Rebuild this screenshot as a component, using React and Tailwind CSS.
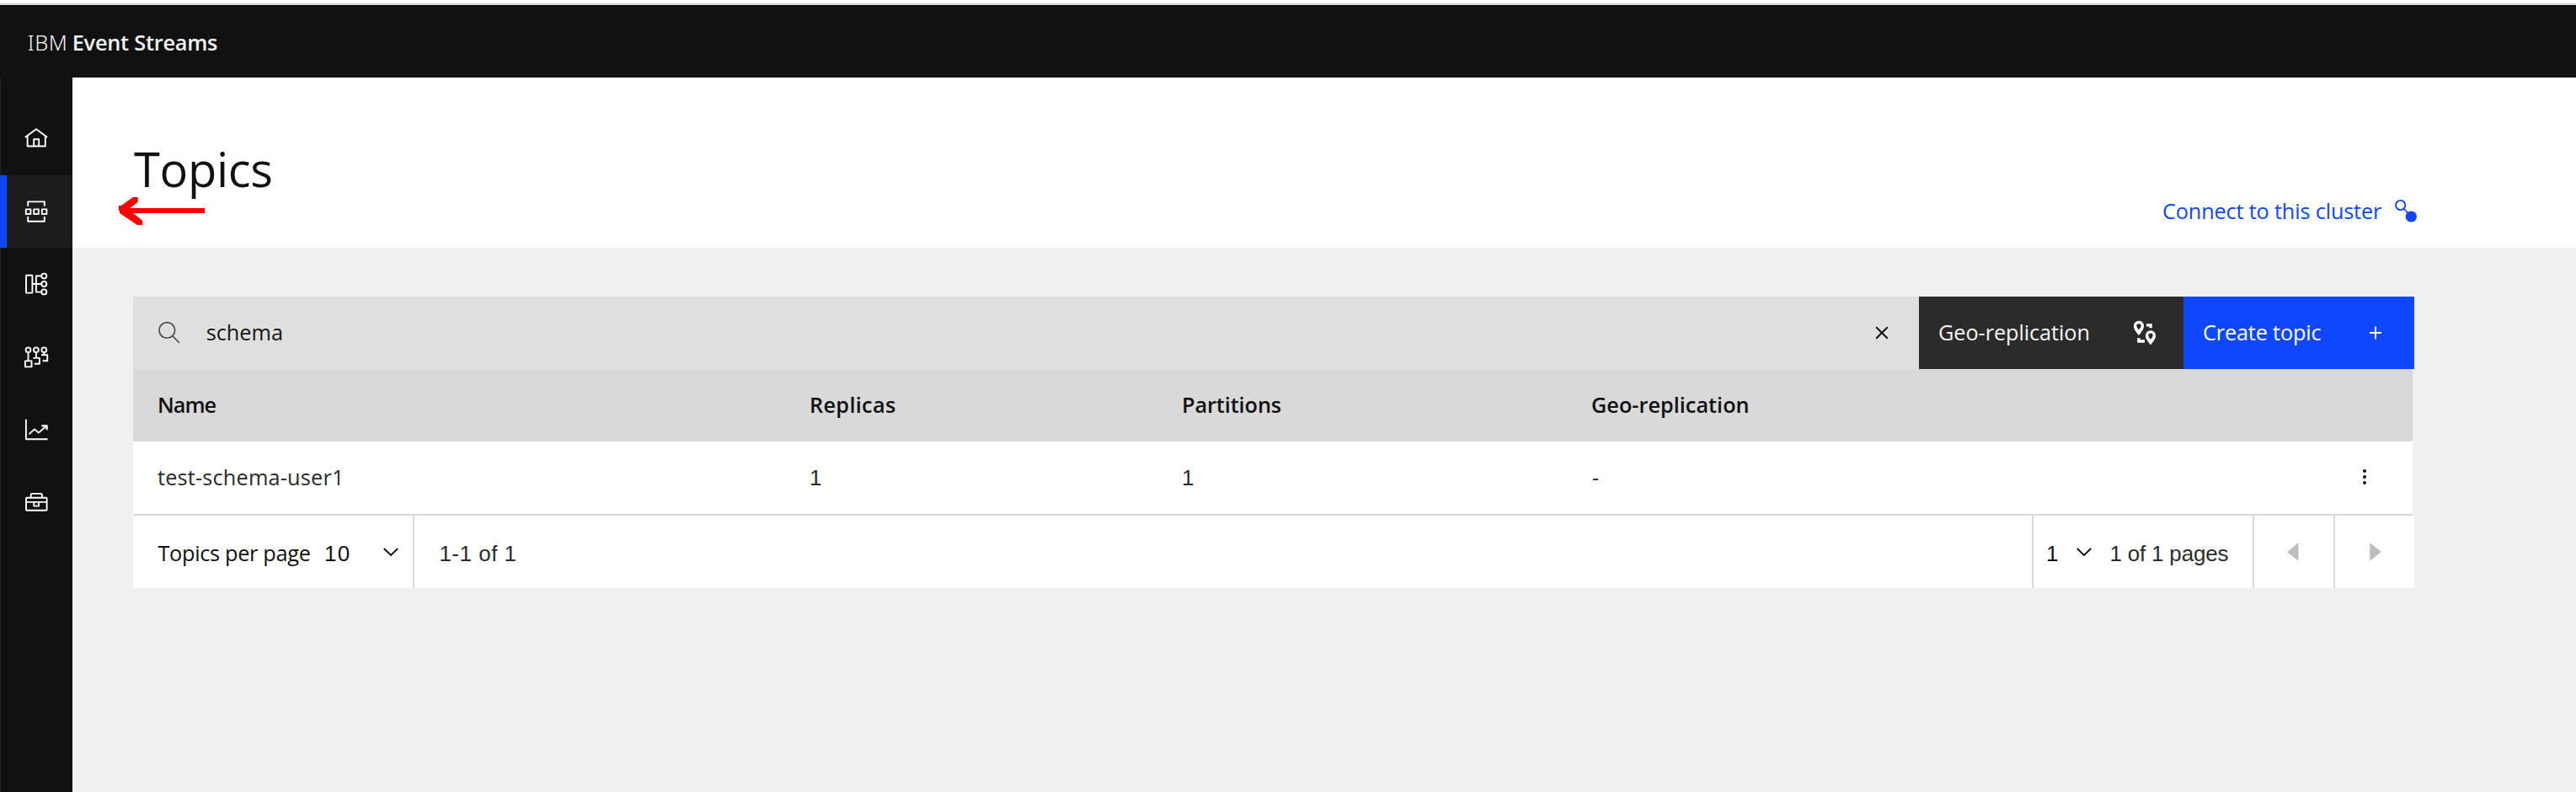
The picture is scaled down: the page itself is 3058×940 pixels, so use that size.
const OPEN = "font-['Open_Sans','Noto_Sans',sans-serif] text-[25.3px]";
const DIGITS = "font-['Liberation_Sans',Arial,sans-serif] text-[26px]";

function NavIcon({ children }) {
  return (
    <svg width="86" height="86" viewBox="0 0 86 86" fill="none" stroke="#fff" strokeWidth="1.9" strokeLinejoin="round" className="block">
      {children}
    </svg>
  );
}

function NavItem({ active, children }) {
  return (
    <a className={"flex h-[86px] w-[86px] shrink-0 " + (active ? "bg-[#1c1c1c] shadow-[inset_8px_0_0_#0f47ff]" : "")}>
      <NavIcon>{children}</NavIcon>
    </a>
  );
}

function Sidebar() {
  return (
    <nav className="flex w-[86px] shrink-0 flex-col bg-[#111] pt-[30px] shadow-[inset_1px_0_0_#242424]">
      <NavItem>
        <path d="M29.8 41 43 31.2 56.2 41M32.6 39.3V51.5H53.8V39.3M40.2 51.5V43.2H46.2V51.5" />
      </NavItem>
      <NavItem active>
        <path d="M33.2 36.8V31.4H52.8V36.8M33.2 49V54.7H52.8V49" />
        <rect x="30.8" y="40.4" width="5.6" height="5.6" />
        <rect x="40.2" y="40.4" width="5.6" height="5.6" />
        <rect x="49.8" y="40.4" width="5.6" height="5.6" />
      </NavItem>
      <NavItem>
        <rect x="31" y="32.8" width="7.4" height="20.8" rx="0.6" />
        <path d="M38.4 43H49.2M49.3 33.5H42.9V52.6H49.3" />
        <circle cx="52.3" cy="33.6" r="3" />
        <circle cx="52.3" cy="43" r="3" />
        <circle cx="52.3" cy="52.4" r="3" />
      </NavItem>
      <NavItem>
        <circle cx="33.5" cy="35.3" r="2.9" />
        <circle cx="42.9" cy="35.3" r="2.9" />
        <circle cx="52.3" cy="35.3" r="2.9" />
        <path d="M33.5 38.2V48.4M42.9 38.2V45M52.3 38.2V41.2M39.4 44.9H46.9V51.8H40.8M49 41.3H56.2V48.3H50.6" />
        <rect x="29.9" y="48.4" width="7.6" height="7" />
      </NavItem>
      <NavItem>
        <path d="M30.9 31.7V55.2H56.6M34.3 49.4 41 43.4 45.8 47.6 55 39.8" />
        <path d="M49.4 39.3H55.6V44.2" strokeWidth="2.2" />
      </NavItem>
      <NavItem>
        <rect x="31" y="38.8" width="24.6" height="15" rx="0.8" />
        <path d="M36.7 38.8V35.2Q36.7 33.9 38 33.9H48.6Q49.9 33.9 49.9 35.2V38.8M31 43.9H55.6M40.3 43.9V48.6H46V43.9" />
      </NavItem>
    </nav>
  );
}

function ConnectIcon() {
  return (
    <svg width="28" height="30" viewBox="0 0 28 30" className="block">
      <circle cx="7.7" cy="8.5" r="5.6" fill="none" stroke="#0f47ff" strokeWidth="1.9" />
      <path d="M11.6 12.5 16 17.5" stroke="#0f47ff" strokeWidth="1.8" />
      <circle cx="20.3" cy="22" r="6.6" fill="#0f47ff" />
    </svg>
  );
}

function GeoIcon() {
  return (
    <svg width="28" height="30" viewBox="0 0 28 30" fill="#fff" className="block">
      <path fillRule="evenodd" d="M7 .7a6.1 6.1 0 0 1 6.1 6.1C13.1 10.8 10 14.3 7 18 4 14.3.9 10.8.9 6.8A6.1 6.1 0 0 1 7 .7ZM7 4.2C5.2 4.2 4.3 5.3 4.3 6.8 4.3 8.2 5.8 9.8 7 11.6 8.2 9.8 9.7 8.2 9.7 6.8 9.7 5.3 8.8 4.2 7 4.2Z" />
      <path fillRule="evenodd" d="M21 12.2a6.1 6.1 0 0 1 6.1 6.1C27.1 22.3 24 25.6 21 29.3 18 25.6 14.9 22.3 14.9 18.3A6.1 6.1 0 0 1 21 12.2ZM21 15.6C19.2 15.6 18.3 16.7 18.3 18.2 18.3 19.6 19.8 21.2 21 23 22.2 21.2 23.7 19.6 23.7 18.2 23.7 16.7 22.8 15.6 21 15.6Z" />
      <path d="M16 4.2H22.8V9.3H19.4V7.6H16ZM5.2 21.2H8.6V23.3H14V26.7H5.2Z" />
    </svg>
  );
}

function Chevron() {
  return (
    <svg width="18" height="12" viewBox="0 0 18 12" fill="none" stroke="#111" strokeWidth="1.9" className="mt-[2px] block shrink-0">
      <path d="M.8 1 9 9 17.2 1" />
    </svg>
  );
}

function Toolbar() {
  return (
    <div className="flex h-[86px] w-[2708px]">
      <div className="flex w-[2120px] items-center bg-[#dfdfdf] pl-[30px]">
        <svg width="26" height="26" viewBox="0 0 26 26" fill="none" stroke="#444" strokeWidth="1.6" className="block shrink-0">
          <circle cx="10.3" cy="10" r="9.3" />
          <path d="M16.8 16.8 25 25" />
        </svg>
        <span className={OPEN + " ml-[30.7px] flex-1 text-[#161616]"}>schema</span>
        <svg width="16" height="16" viewBox="0 0 16 16" stroke="#111" strokeWidth="2" className="mr-[36px] block">
          <path d="M1.2 1.2 14.8 14.8M14.8 1.2 1.2 14.8" />
        </svg>
      </div>
      <button className="flex w-[314px] items-center bg-[#2b2b2b] pl-[23px] text-white">
        <span className={OPEN + " w-[231px] text-left tracking-[-0.08px] text-[#f6f6f6]"}>Geo-replication</span>
        <GeoIcon />
      </button>
      <button className="flex w-[274px] items-center bg-[#0f47ff] pl-[23px] text-white">
        <span className={OPEN + " w-[198px] text-left tracking-[-0.18px]"}>Create topic</span>
        <svg width="14" height="16" viewBox="0 0 14 16" stroke="#fff" strokeWidth="2" className="block">
          <path d="M0 8H14M7 .5V15.5" />
        </svg>
      </button>
    </div>
  );
}

const GRID = "grid h-[86px] grid-cols-[774px_442px_486px_1fr_70px] items-center pl-[29px]";

function Table() {
  return (
    <div className="w-[2706px] border-b-2 border-[#d9d9d9]">
      <div className={GRID + " " + OPEN + " bg-[#d9d9d9] font-semibold text-[#111]"}>
        <span className="tracking-[-1px]">Name</span>
        <span className="tracking-[0.3px]">Replicas</span>
        <span className="tracking-[-0.1px]">Partitions</span>
        <span>Geo-replication</span>
      </div>
      <div className={GRID + " bg-white text-[#2b2b2b]"}>
        <span className={OPEN + " tracking-[0.18px]"}>test-schema-user1</span>
        <span className={DIGITS}>1</span>
        <span className={DIGITS}>1</span>
        <span className={OPEN + " pl-[1px]"}>-</span>
        <svg width="6" height="20" viewBox="0 0 6 20" fill="#111" className="ml-[10px] block">
          <circle cx="3" cy="2" r="2" />
          <circle cx="3" cy="9" r="2" />
          <circle cx="3" cy="16" r="2" />
        </svg>
      </div>
    </div>
  );
}

function Pagination() {
  return (
    <div className="flex h-[86px] w-[2708px] bg-white text-[#2b2b2b]">
      <div className="flex w-[334px] items-center border-r-2 border-[#d9d9d9] pl-[29.5px] text-[#111]">
        <span className={OPEN + " w-[197.5px] pt-[3px] tracking-[-0.32px]"}>Topics per page</span>
        <span className={DIGITS + " w-[69.5px] pt-1 tracking-[1.2px]"}>10</span>
        <Chevron />
      </div>
      <div className="flex flex-1 items-center border-r-2 border-[#d9d9d9] pl-[29.4px]">
        <span className={DIGITS + " pt-1 tracking-[0.5px]"}>1-1 of 1</span>
      </div>
      <div className="flex w-[262px] items-center border-r-2 border-[#d9d9d9] pl-[15px]">
        <span className={DIGITS + " w-[36px] pt-1 text-[#111]"}>1</span>
        <Chevron />
        <span className={DIGITS + " ml-[21.5px] pt-1 tracking-[-0.2px]"}>1 of 1 pages</span>
      </div>
      <button className="flex w-[96px] items-center border-r-2 border-[#d9d9d9] pl-[39px]">
        <svg width="14" height="22" viewBox="0 0 14 22" fill="#bdbdbd" className="block"><path d="M0 11 13.5.3V21.7Z" /></svg>
      </button>
      <button className="flex w-[94px] items-center pl-[41px]">
        <svg width="14" height="22" viewBox="0 0 14 22" fill="#bdbdbd" className="block"><path d="M14 11 .3.3V21.7Z" /></svg>
      </button>
    </div>
  );
}

export default function App() {
  return (
    <div className="relative flex h-[940px] w-[3058px] flex-col overflow-hidden whitespace-nowrap bg-white pt-1">
      <header className="flex h-[88px] shrink-0 items-center border-t-2 border-[#d6dadb] bg-[#111] pl-[32.7px] pt-[4px] text-[#f3f3f3]">
        <span className="w-[53px] font-['Noto_Sans',sans-serif] text-[25.3px] font-[350] tracking-[0.6px]">IBM</span>
        <span className={OPEN + " font-semibold tracking-[-0.22px]"}>Event Streams</span>
      </header>
      <div className="flex flex-1">
        <Sidebar />
        <main className="flex flex-1 flex-col bg-[#f0f0f0]">
          <div className="flex h-[202px] items-start bg-white pl-[73px]">
            <h1 className="w-[2408px] pt-[68px] font-['Open_Sans','Noto_Sans',sans-serif] text-[56px] leading-[80px] tracking-[-0.3px] text-[#111]">Topics</h1>
            <a className="flex items-center pt-[138px] text-[#0f47ff]">
              <span className={OPEN + " w-[275px] leading-[40px] tracking-[-0.17px]"}>Connect to this cluster</span>
              <ConnectIcon />
            </a>
          </div>
          <div className="flex flex-col pl-[72px] pt-[58px]">
            <Toolbar />
            <Table />
            <Pagination />
          </div>
        </main>
      </div>
      <svg width="110" height="40" viewBox="0 0 110 40" fill="#ff0000" className="absolute left-[136px] top-[230px]">
        <path d="M5 14H8L22 4H27.700V9.700L18.300 17H107V23H22L33 31.700V37H27L6 23V20H5Z" />
      </svg>
    </div>
  );
}
